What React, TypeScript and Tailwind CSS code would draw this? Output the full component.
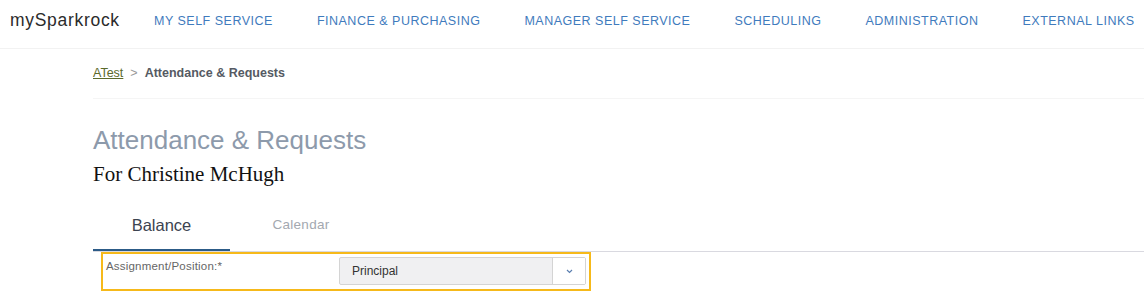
import React from 'react';

const navItems = [
  'MY SELF SERVICE',
  'FINANCE & PURCHASING',
  'MANAGER SELF SERVICE',
  'SCHEDULING',
  'ADMINISTRATION',
  'EXTERNAL LINKS',
];

const App: React.FC = () => {
  return (
    <div className="w-[1144px] h-[299px] bg-white overflow-hidden font-['Liberation_Sans',Arial,sans-serif]">
      {/* Top navigation */}
      <div className="h-[49px] flex items-start border-b border-[#f2f2f2]">
        <div className="pl-[10px] pt-[7px] text-[17.5px] tracking-[0.7px] text-[#2b2b2b] w-[154px] shrink-0">
          mySparkrock
        </div>
        <nav className="flex gap-[44px] pt-[12px] whitespace-nowrap">
          {navItems.map((item) => (
            <span
              key={item}
              className="text-[12.5px] tracking-[0.5px] text-[#3f7bbd]"
            >
              {item}
            </span>
          ))}
        </nav>
      </div>

      <div className="pl-[93px]">
        {/* Breadcrumb */}
        <div className="h-[50px] flex items-center text-[12.5px] border-b border-[#f5f5f5]">
          <span className="underline text-[#5b6a2b]">ATest</span>
          <span className="mx-[7px] text-[#999]">&gt;</span>
          <span className="font-bold text-[#555a63]">Attendance &amp; Requests</span>
        </div>

        {/* Title */}
        <h1 className="mt-[25px] text-[26px] leading-[32px] text-[#8d9aab]">
          Attendance &amp; Requests
        </h1>
        <div className="mt-[5px] text-[21px] leading-[26px] text-[#111] font-['Liberation_Serif','Times_New_Roman',serif]">
          For Christine McHugh
        </div>

        {/* Tabs */}
        <div className="mt-[20px] flex border-b border-[#d9d9e0]">
          <div className="w-[137px] h-[44px] pt-[6px] text-center text-[16.5px] leading-[24px] text-[#3c4350] border-b-2 border-[#2c5b87] -mb-px">
            Balance
          </div>
          <div className="w-[142px] h-[44px] pt-[6px] text-center text-[13.5px] leading-[24px] text-[#a3a8b0] tracking-[0.3px]">
            Calendar
          </div>
        </div>

        {/* Assignment filter */}
        <div className="ml-[8px] w-[490px] h-[39px] border-2 border-[#f6b91a] flex items-start">
          <div className="w-[236px] pl-[3px] pt-[4px] text-[11.5px] text-[#666] tracking-[0.2px]">
            Assignment/Position:*
          </div>
          <div className="mt-[3px] w-[247px] h-[28px] flex border border-[#d4d4d4] rounded-[2px] bg-[#f0f0f2]">
            <div className="flex-1 pl-[12px] flex items-center text-[12px] text-[#333]">
              Principal
            </div>
            <div className="w-[33px] border-l border-[#d4d4d4] bg-white flex items-center justify-center">
              <svg width="7" height="5" viewBox="0 0 7 5">
                <path d="M1 1 L3.5 3.5 L6 1" fill="none" stroke="#5b7fb0" strokeWidth="1.2" />
              </svg>
            </div>
          </div>
        </div>
      </div>
    </div>
  );
};

export default App;
